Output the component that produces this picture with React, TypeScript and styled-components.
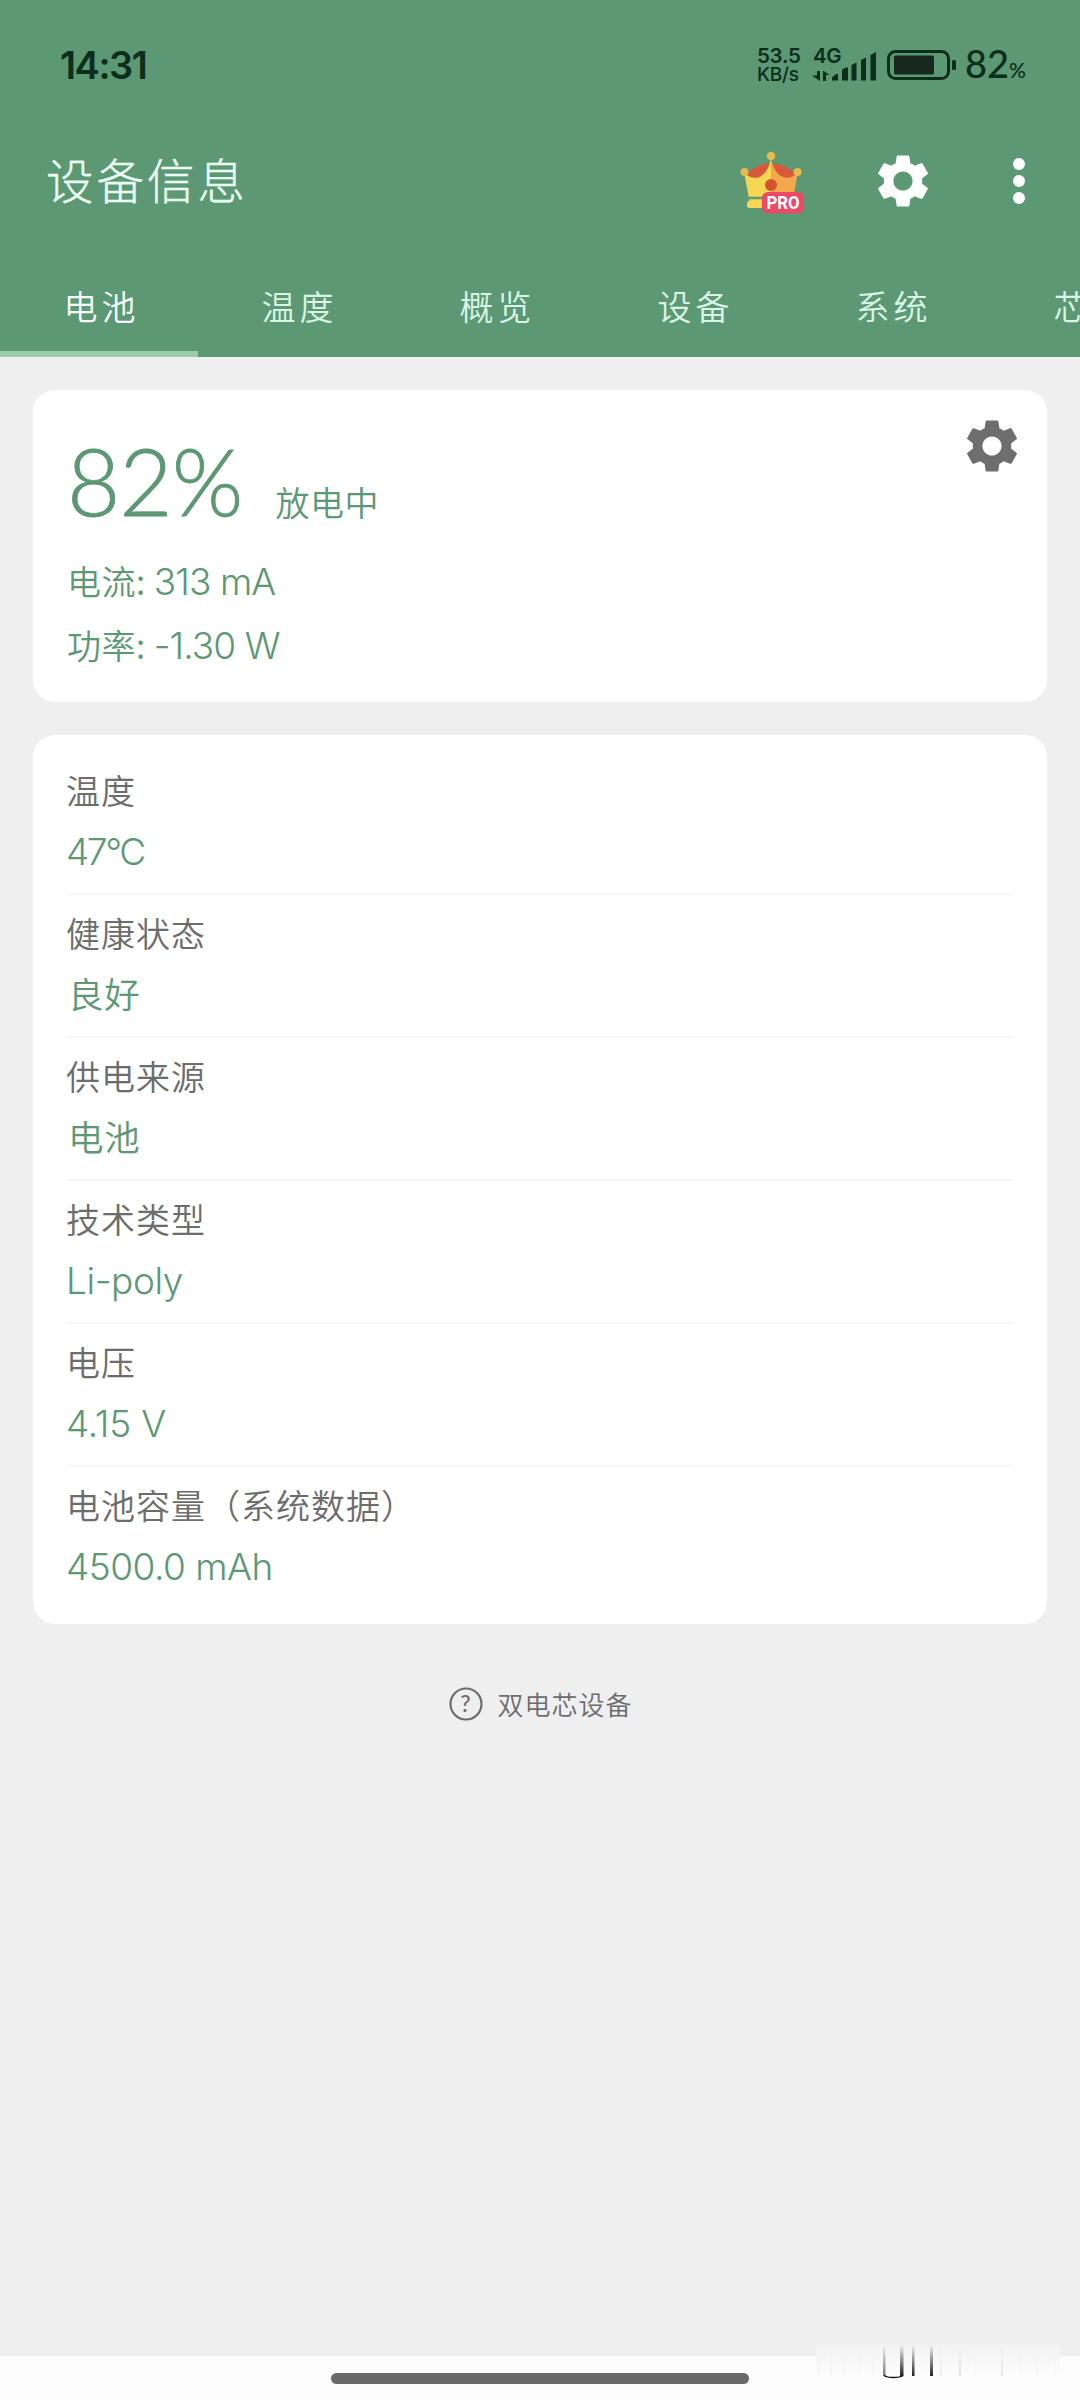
import React from "react";
import styled, { createGlobalStyle } from "styled-components";
import { MdSettings } from "react-icons/md";

const green = "#5b9873";
const ink = "#0c2e1b";
const cjk = '"Noto Sans CJK SC", sans-serif';
const lato = `Lato, ${cjk}`;
const inter = `Inter, ${cjk}`;

const GlobalStyle = createGlobalStyle`
  * { box-sizing: border-box; }
  body { margin: 0; background: #efefef; font-family: ${cjk}; }
`;

const Screen = styled.div`
  position: relative;
  width: 1080px;
  height: 2400px;
  display: flex;
  flex-direction: column;
  overflow: hidden;
  background: #efefef;
`;

const Header = styled.header`
  height: 357px;
  display: flex;
  flex-direction: column;
  background: ${green};
`;

const StatusBar = styled.div`
  height: 129px;
  padding: 0 53px 0 60px;
  display: flex;
  align-items: center;
  justify-content: space-between;
  color: ${ink};
`;

const Clock = styled.span`
  font: 600 38px/50px ${inter};
  letter-spacing: -1.5px;
`;

const StatusGroup = styled.div`
  display: flex;
  align-items: center;
`;

const Speed = styled.div`
  width: 55px;
  display: flex;
  flex-direction: column;
  font: 600 20.5px/19px ${inter};
  letter-spacing: -0.3px;
`;

const SpeedUnit = styled.span`
  font-size: 19px;
  font-weight: 500;
`;

const Signal = styled.svg`
  width: 66px;
  height: 44px;
  margin-right: 9px;
  font: 600 20.5px ${inter};
`;

const Battery = styled.svg`
  width: 70px;
  height: 30px;
  margin-right: 8px;
`;

const Level = styled.span`
  width: 62px;
  padding-top: 3px;
  font: 500 38px/50px ${lato};
  white-space: nowrap;
`;

const LevelSign = styled.small`
  font-size: 21px;
`;

const Toolbar = styled.div`
  height: 104px;
  padding: 0 55px 0 46px;
  display: flex;
  align-items: center;
`;

const Title = styled.h1`
  margin: 0;
  padding-bottom: 5px;
  flex: 1;
  font: 300 47.5px/70px ${cjk};
  letter-spacing: 3px;
  color: #eafff2;
  -webkit-text-stroke: 0.4px #eafff2;
`;

const Crown = styled.svg`
  width: 68px;
  height: 68px;
  margin-right: 66px;
  font: 700 17.5px Roboto, sans-serif;
`;

const Gear = styled(MdSettings)<{ $color: string }>`
  width: 64px;
  height: 64px;
  color: ${(p) => p.$color};
`;

const Dots = styled.div`
  margin-left: 78px;
  display: flex;
  flex-direction: column;
  gap: 5px;
`;

const Dot = styled.i`
  width: 12px;
  height: 12px;
  border-radius: 50%;
  background: #fff;
`;

const Tabs = styled.nav`
  flex: 1;
  display: flex;
  overflow: hidden;
`;

const Tab = styled.div<{ $active?: boolean }>`
  flex: 0 0 198px;
  padding: 45px 0 0 5px;
  border-bottom: 6px solid ${(p) => (p.$active ? "#9ccbb1" : "transparent")};
  text-align: center;
  font: 350 34px/56px ${cjk};
  letter-spacing: 4px;
  color: ${(p) => (p.$active ? "#f6fffa" : "#d9f5e4")};
`;

const Main = styled.main`
  flex: 1;
  padding: 33px;
  display: flex;
  flex-direction: column;
  align-items: stretch;
`;

const Card = styled.section<{ $height: number }>`
  height: ${(p) => p.$height}px;
  margin-bottom: 33px;
  padding: 0 33px;
  border-radius: 22px;
  background: #fff;
`;

const SummaryCard = styled(Card)`
  padding-right: 23px;
  display: flex;
  justify-content: space-between;
`;

const Summary = styled.div`
  display: flex;
  flex-direction: column;
  padding-top: 35px;
  color: ${green};
`;

const Charge = styled.div`
  height: 124px;
  display: flex;
  align-items: baseline;
  gap: 33px;
`;

const Percent = styled.span`
  padding-left: 1px;
  font: 300 92px/112px ${lato};
  letter-spacing: -1px;
  -webkit-text-stroke: 0.8px ${green};
`;

const ChargeState = styled.span`
  font: 350 34px/48px ${cjk};
  letter-spacing: 0.5px;
`;

const Reading = styled.div`
  height: 64px;
  padding-left: 1px;
  font: 350 34px/64px ${cjk};
  letter-spacing: 0.5px;
  white-space: pre;
`;

const Figure = styled.span<{ $track?: number }>`
  font-family: ${inter};
  font-size: 37px;
  font-weight: 350;
  letter-spacing: ${(p) => p.$track ?? -0.9}px;
`;

const GearSlot = styled.div`
  padding-top: 24px;
`;

const InfoCard = styled(Card)`
  padding-top: 17px;
`;

const Row = styled.div`
  height: 143px;
  padding-top: 10px;
  border-bottom: 2px solid #f7f7f7;
  &:last-child { border-bottom: 0; }
`;

const Label = styled.div`
  font: 350 34px/56px ${cjk};
  letter-spacing: 1px;
  color: #6c6c6c;
`;

const Value = styled.div<{ $indent: number }>`
  height: 60px;
  padding: 2px 0 0 ${(p) => p.$indent}px;
  font: 350 35.5px/60px ${cjk};
  letter-spacing: 0.8px;
  color: ${green};
`;

const Hint = styled.div`
  margin-top: 27px;
  padding-left: 2px;
  display: flex;
  align-items: center;
  justify-content: center;
  gap: 14px;
  font: 350 26px/40px ${cjk};
  letter-spacing: 1px;
  color: #6c6c6c;
`;

const HintIcon = styled.svg`
  width: 34px;
  height: 34px;
  font: 500 23px ${lato};
`;

const NavBar = styled.footer`
  height: 44px;
  padding-top: 17px;
  display: flex;
  justify-content: center;
  align-items: flex-start;
  background: #fdfdfd;
`;

const HomePill = styled.div`
  width: 418px;
  height: 11px;
  border-radius: 6px;
  background: #6a6a6a;
`;

const Smudge = styled.svg`
  position: absolute;
  left: 814px;
  top: 2340px;
  width: 260px;
  height: 44px;
`;

const tabs = ["电池", "温度", "概览", "设备", "系统", "芯片"];

const rows: { label: string; value: string; latin?: boolean; track?: number }[] = [
  { label: "温度", value: "47°C", latin: true, track: -2.4 },
  { label: "健康状态", value: "良好" },
  { label: "供电来源", value: "电池" },
  { label: "技术类型", value: "Li-poly", latin: true, track: -0.4 },
  { label: "电压", value: "4.15 V", latin: true, track: -0.2 },
  { label: "电池容量（系统数据）", value: "4500.0 mAh", latin: true, track: -0.5 },
];

const streaks = [
  [4, 0.03], [16, 0.04], [30, 0.03], [44, 0.02], [58, 0.03], [126, 0.07],
  [145, 0.12], [160, 0.02], [187, 0.1], [206, 0.02], [222, 0.03], [240, 0.02],
];

export default function App() {
  return (
    <>
      <GlobalStyle />
      <Screen>
        <Header>
          <StatusBar>
            <Clock>14:31</Clock>
            <StatusGroup>
              <Speed>
                <span>53.5</span>
                <SpeedUnit>KB/s</SpeedUnit>
              </Speed>
              <Signal viewBox="0 -4 66 44" fill={ink}>
                <text x="1" y="16" letterSpacing="-0.5">4G</text>
                <path d="M5 24h3v10L0 28.500h5zM11 34h3v-6h3.500L11 23.500z" />
                <path d="M20 33.500v-3l4-3.500h2v6.500zM30 33.500v-11l4-2h2v13zM39.500 33.500v-15.500l5-2.500v18zM49 33.500V13l5-2.500v23zM58.500 33.500V8l5.500-3v28.500z" />
              </Signal>
              <Battery viewBox="0 0 70 30" fill={ink}>
                <rect x="1.500" y="1.500" width="60" height="27" rx="7" fill="none" stroke={ink} strokeWidth="3" />
                <rect x="7" y="5.500" width="40" height="19" rx="1.500" fill="#19281f" />
                <rect x="65" y="10" width="4" height="10" rx="1.500" />
              </Battery>
              <Level>
                82<LevelSign>%</LevelSign>
              </Level>
            </StatusGroup>
          </StatusBar>
          <Toolbar>
            <Title>设备信息</Title>
            <Crown viewBox="0 0 68 68">
              <path d="M9 30C17 12 51 12 59 30L50 46H16z" fill="#d9583a" />
              <path d="M7 25C15 35 30 33 34 11V57H13z" fill="#f7d654" />
              <path d="M61 25C53 35 38 33 34 11V57H55z" fill="#f3a84b" />
              <path d="M12 51h42" stroke={green} strokeWidth="2.500" />
              <rect x="10" y="54" width="42" height="7" rx="2.500" fill="#f7d654" />
              <circle cx="34" cy="9" r="4.300" fill="#e4bb4c" />
              <circle cx="7.500" cy="25" r="4" fill="#e4bb4c" />
              <circle cx="60.500" cy="25" r="4" fill="#e4bb4c" />
              <circle cx="34" cy="38" r="6" fill="#d2532e" />
              <rect x="25" y="45" width="42" height="21.500" rx="6" fill="#ec4968" />
              <text x="46" y="62" textAnchor="middle" fill="#fff" textLength="33" lengthAdjust="spacingAndGlyphs">PRO</text>
            </Crown>
            <Gear $color="#fff" />
            <Dots>
              <Dot />
              <Dot />
              <Dot />
            </Dots>
          </Toolbar>
          <Tabs>
            {tabs.map((t, i) => (
              <Tab key={t} $active={i === 0}>{t}</Tab>
            ))}
          </Tabs>
        </Header>
        <Main>
          <SummaryCard $height={312}>
            <Summary>
              <Charge>
                <Percent>82%</Percent>
                <ChargeState>放电中</ChargeState>
              </Charge>
              <Reading>
                电流: <Figure>313 mA</Figure>
              </Reading>
              <Reading>
                功率: <Figure>-1.30 W</Figure>
              </Reading>
            </Summary>
            <GearSlot>
              <Gear $color="#6e6e6e" />
            </GearSlot>
          </SummaryCard>
          <InfoCard $height={889}>
            {rows.map((r) => (
              <Row key={r.label}>
                <Label>{r.label}</Label>
                <Value $indent={r.latin ? 0 : 2}>
                  {r.latin ? <Figure $track={r.track}>{r.value}</Figure> : r.value}
                </Value>
              </Row>
            ))}
          </InfoCard>
          <Hint>
            <HintIcon viewBox="0 0 34 34">
              <circle cx="17" cy="17" r="15.500" fill="none" stroke="#6c6c6c" strokeWidth="2.200" />
              <text x="17" y="25" textAnchor="middle" fill="#6c6c6c">?</text>
            </HintIcon>
            双电芯设备
          </Hint>
        </Main>
        <NavBar>
          <HomePill />
        </NavBar>
        <Smudge viewBox="0 0 260 44">
          <defs>
            <linearGradient id="haze" x1="0" y1="0" x2="0" y2="1">
              <stop offset="0" stopColor="#f2f2f2" />
              <stop offset="1" stopColor="#fdfdfd" />
            </linearGradient>
            <linearGradient id="streak" x1="0" y1="0" x2="0" y2="1">
              <stop offset="0" stopColor="#222" stopOpacity="0" />
              <stop offset="1" stopColor="#222" />
            </linearGradient>
          </defs>
          <rect x="2" y="4" width="244" height="32" fill="url(#haze)" />
          {streaks.map(([x, o]) => (
            <rect key={x} x={x} y="5" width="2" height="31" fill="url(#streak)" opacity={o} />
          ))}
          <rect x="69" y="5" width="2.500" height="31" fill="url(#streak)" opacity="0.6" />
          <rect x="86" y="5" width="3.500" height="31" fill="url(#streak)" />
          <rect x="98" y="5" width="2.500" height="31" fill="url(#streak)" />
          <rect x="116" y="5" width="3" height="31" fill="url(#streak)" />
          <path d="M70 35.500q3 2 9.500 2t9.500-2" fill="none" stroke="#111" strokeWidth="1.500" />
        </Smudge>
      </Screen>
    </>
  );
}
